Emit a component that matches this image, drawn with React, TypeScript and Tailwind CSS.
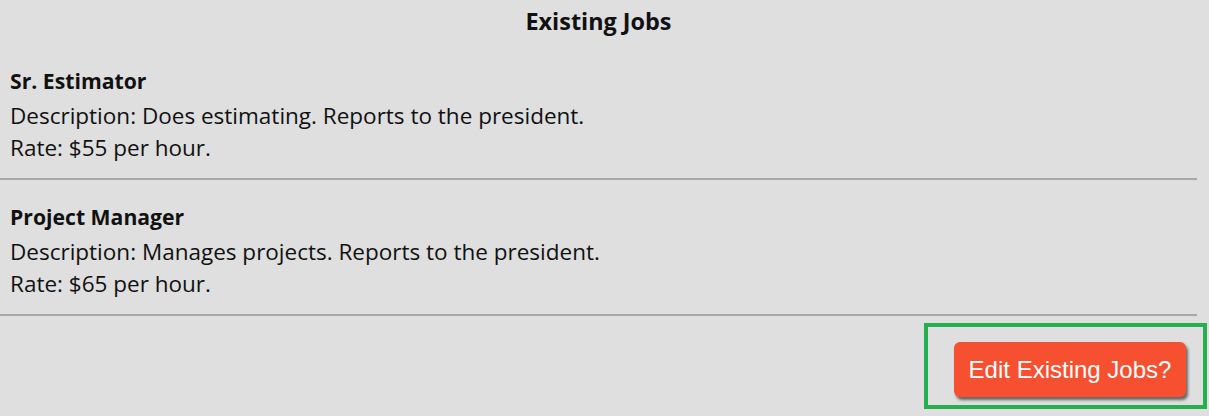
import React from 'react';

interface Job {
  title: string;
  description: string;
  rate: number;
}

const jobs: Job[] = [
  { title: 'Sr. Estimator', description: 'Does estimating. Reports to the president.', rate: 55 },
  { title: 'Project Manager', description: 'Manages projects. Reports to the president.', rate: 65 },
];

export default function App() {
  return (
    <div
      className="min-h-[416px] w-full bg-[#dfdfdf] text-[#111] text-[22.5px]"
      style={{ fontFamily: '"Open Sans", "Noto Sans", sans-serif' }}
    >
      <div className="pr-[12px]">
        <h2 className="pt-[5px] text-center text-[23.4px] font-bold leading-[32px]">Existing Jobs</h2>
        <ul className="mt-[7px]">
          {jobs.map((job, index) => (
            <li key={index} className="border-b-2 border-[#a8a8a8] pl-[10px] pt-[21px] pb-[14px]">
              <h3 className="text-[21.2px] font-bold leading-[32px] mb-[3px]">{job.title}</h3>
              <p className="leading-[32px]">Description: {job.description}</p>
              <p className="leading-[32px]">Rate: ${job.rate} per hour.</p>
            </li>
          ))}
        </ul>
      </div>

      {/* Action */}
      <div className="flex justify-end pr-[2px] pt-[7px]">
        <div className="border-4 border-[#22b14c] pl-[26px] pr-[17px] pt-[15px] pb-[8px]">
          <button
            className="h-[55px] w-[232px] rounded-[6px] bg-[#f75030] text-white text-[24px] shadow-[2px_3px_3px_rgba(0,0,0,0.55)]"
            style={{ fontFamily: '"Liberation Sans", Arial, sans-serif' }}
          >
            Edit Existing Jobs?
          </button>
        </div>
      </div>
    </div>
  );
}
